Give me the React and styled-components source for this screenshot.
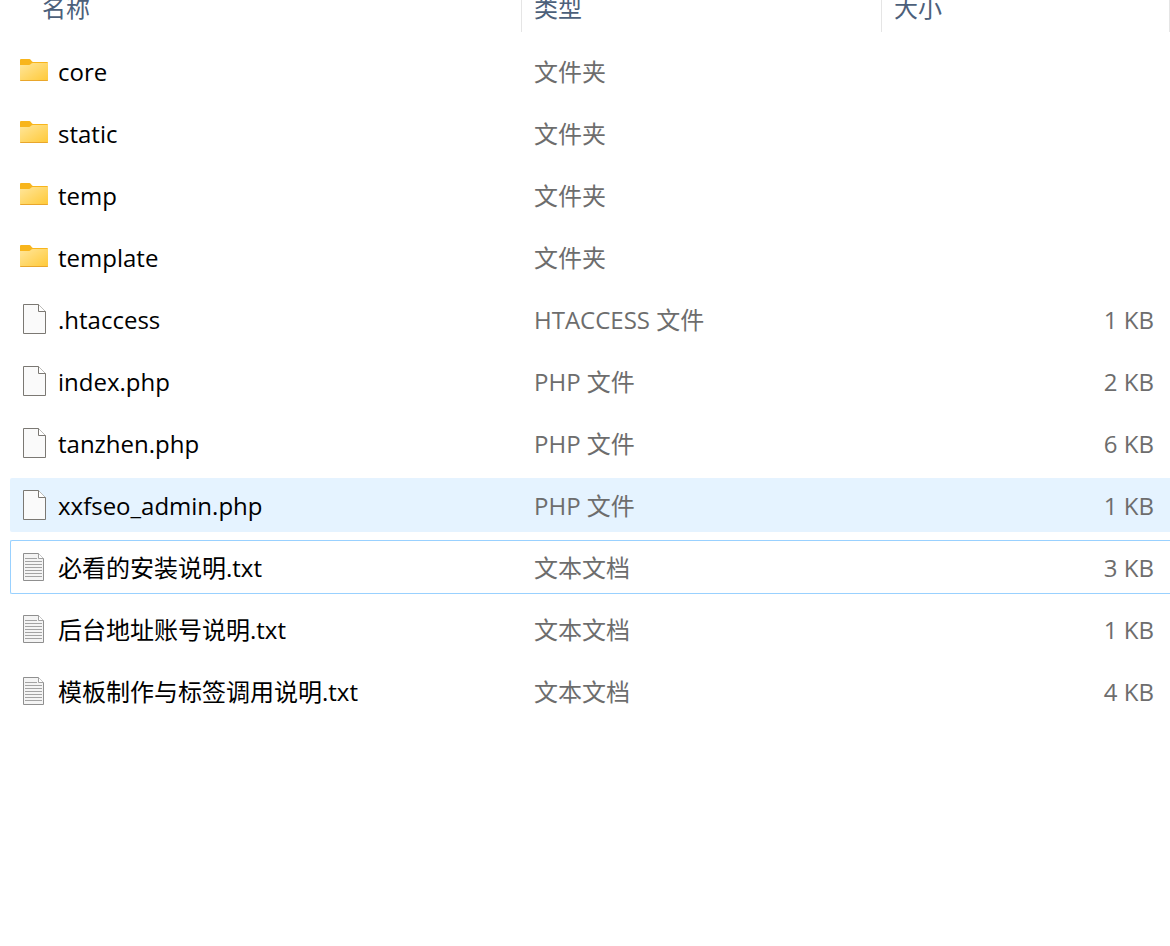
import React from 'react';
import styled, { createGlobalStyle, css } from 'styled-components';

const GlobalStyle = createGlobalStyle`
* {
    box-sizing: border-box;
}
body {
    margin: 0;
    background: #ffffff;
    font-family: "Open Sans", "Noto Sans CJK SC", sans-serif;
    font-size: 24px;
    line-height: 32px;
    color: #000000;
}
`;

const ExplorerStyles = styled.main`
overflow: hidden;
min-height: 100vh;
padding-left: 10px;
`;

/* the list is scrolled a little, so the header row is partly hidden */
const FileTable = styled.table`
width: 100%;
margin-top: -24px;
table-layout: fixed;
border-collapse: separate;
border-spacing: 0 8px;
`;

const Column = styled.col`
width: ${props => props.$width || 'auto'};
`;

const HeaderCell = styled.th`
padding: 0 0 4px;
font-weight: 400;
text-align: left;
`;

const HeaderButton = styled.button`
display: block;
width: 100%;
height: 48px;
padding: 0 12px;
border: 0;
border-right: 1px solid #e5e5e5;
background: none;
color: #4c607a;
font: inherit;
text-align: left;
&.first {
    padding-left: 32px;
}
`;

const FileRow = styled.tr`
${props => props.$hovered && css`
    background: #e5f3ff;
`}
`;

const Cell = styled.td`
height: 54px;
padding: 2px 16px 0 12px;
border: 1px solid transparent;
border-width: 1px 0;
color: #6d6d6d;
text-align: ${props => props.$align || 'left'};
white-space: nowrap;
${props => props.$focused && css`
    border-color: #99d1ff;
`}
`;

const NameCell = styled(Cell)`
padding: 0 8px 0 7px;
border-left-width: 1px;
border-radius: 2px 0 0 2px;
color: #000000;
`;

const FileName = styled.div`
display: flex;
align-items: center;
gap: 8px;
span {
    padding-top: 2px;
}
`;

const Icon = styled.svg`
flex: none;
width: 32px;
height: 32px;
`;

const FolderIcon = () => (
    <Icon viewBox="0 0 32 32" aria-hidden="true">
        <defs>
            <linearGradient id="folder-front" x1="0" y1="0" x2="1" y2="1">
                <stop offset="0" stopColor="#ffe69b" />
                <stop offset="1" stopColor="#ffc937" />
            </linearGradient>
        </defs>
        <path d="M2 5a1 1 0 0 1 1-1h8.500c1.500 0 2 3 3.500 3H29a1 1 0 0 1 1 1v4H2z" fill="#f8b51c" />
        <path d="M2 10h9c1.500 0 2-2 4-2h15v17a1 1 0 0 1-1 1H3a1 1 0 0 1-1-1z" fill="url(#folder-front)" />
        <path d="M2 25h28a1 1 0 0 1-1 1H3a1 1 0 0 1-1-1z" fill="#e9a62b" />
    </Icon>
);

const BlankIcon = () => (
    <Icon viewBox="0 0 32 32" aria-hidden="true">
        <path d="M5.500 1.500h15l7 7v22h-22z" fill="#fafafa" stroke="#7b7873" />
        <path d="M20.500 1.500v7h7" fill="#ffffff" stroke="#7b7873" />
    </Icon>
);

const TextIcon = () => (
    <Icon viewBox="0 0 32 32" aria-hidden="true">
        <path d="M5.500 2.500h15l5 5v22h-20z" fill="#f4f4f4" stroke="#8f8f8f" />
        <path d="M20.500 2.500v5h5" fill="#ffffff" stroke="#a0a0a0" />
        <path d="M7 7.500h12M7 10.500h17M7 13.500h17M7 16.500h17M7 19.500h17M7 22.500h17M7 25.500h17" fill="none" stroke="#a3a3a3" />
    </Icon>
);

const icons = {
    folder: FolderIcon,
    blank: BlankIcon,
    text: TextIcon,
};

const files = [
    { name: 'core', type: '文件夹', icon: 'folder' },
    { name: 'static', type: '文件夹', icon: 'folder' },
    { name: 'temp', type: '文件夹', icon: 'folder' },
    { name: 'template', type: '文件夹', icon: 'folder' },
    { name: '.htaccess', type: 'HTACCESS 文件', size: '1 KB', icon: 'blank' },
    { name: 'index.php', type: 'PHP 文件', size: '2 KB', icon: 'blank' },
    { name: 'tanzhen.php', type: 'PHP 文件', size: '6 KB', icon: 'blank' },
    { name: 'xxfseo_admin.php', type: 'PHP 文件', size: '1 KB', icon: 'blank', hovered: true },
    { name: '必看的安装说明.txt', type: '文本文档', size: '3 KB', icon: 'text', focused: true },
    { name: '后台地址账号说明.txt', type: '文本文档', size: '1 KB', icon: 'text' },
    { name: '模板制作与标签调用说明.txt', type: '文本文档', size: '4 KB', icon: 'text' },
];

const FileItem = ({ file }) => {
    const FileIcon = icons[file.icon];
    return (
        <FileRow $hovered={file.hovered}>
            <NameCell $focused={file.focused}>
                <FileName>
                    <FileIcon />
                    <span>{file.name}</span>
                </FileName>
            </NameCell>
            <Cell $focused={file.focused}>{file.type}</Cell>
            <Cell $focused={file.focused} $align="right">{file.size}</Cell>
        </FileRow>
    );
};

const App = () => {
    return (
        <ExplorerStyles lang="zh-CN">
            <GlobalStyle />
            <FileTable>
                <colgroup>
                    <Column $width="512px" />
                    <Column $width="360px" />
                    <Column />
                </colgroup>
                <thead>
                    <tr>
                        <HeaderCell scope="col"><HeaderButton type="button" className="first">名称</HeaderButton></HeaderCell>
                        <HeaderCell scope="col"><HeaderButton type="button">类型</HeaderButton></HeaderCell>
                        <HeaderCell scope="col"><HeaderButton type="button">大小</HeaderButton></HeaderCell>
                    </tr>
                </thead>
                <tbody>
                    {files.map(file => <FileItem key={file.name} file={file} />)}
                </tbody>
            </FileTable>
        </ExplorerStyles>
    );
};

export default App;
